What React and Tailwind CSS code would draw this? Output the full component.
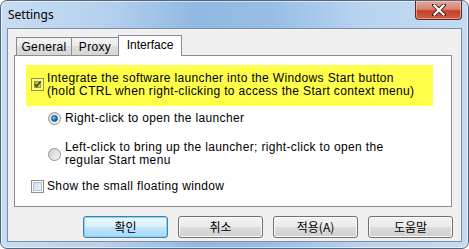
import React from 'react';

const UI = { fontFamily: '"Liberation Sans", "Noto Sans CJK KR", sans-serif' };
const KR = { fontFamily: '"Noto Sans CJK KR", "Liberation Sans", sans-serif' };

function CheckBox({ checked, tint }) {
  if (tint) {
    return (
      <span className="relative block w-[13px] h-[13px] shrink-0 border border-[#8f8f66] bg-[#ffff66]">
        <span className="absolute left-[2px] top-[2px] w-[7px] h-[7px] bg-[linear-gradient(135deg,#a9ab44_0%,#d6d85c_100%)] border border-[#9a9c4a]" />
        {checked && (
          <svg className="absolute left-[1px] top-[1px]" width="9" height="9" viewBox="0 0 9 9">
            <path d="M1.5 4.2 L3.6 6.6 L7.6 1.6" fill="none" stroke="#3d4d22" strokeWidth="1.6" />
          </svg>
        )}
      </span>
    );
  }
  return (
    <span className="relative block w-[13px] h-[13px] shrink-0 border border-[#8e8f8f] bg-white">
      <span className="absolute left-[1px] top-[1px] w-[9px] h-[9px] border border-[#b3c3d6] bg-[linear-gradient(135deg,#cbdcee_0%,#eef4fa_100%)]" />
    </span>
  );
}

function Radio({ on }) {
  return (
    <span className="relative flex items-center justify-center w-[13px] h-[13px] shrink-0 rounded-full border border-[#8e8f8f] bg-[linear-gradient(135deg,#d6d6d6_0%,#f8f8f8_100%)]">
      {on ? (
        <span className="block w-[7px] h-[7px] rounded-full bg-[radial-gradient(circle_at_35%_35%,#8fd3f7_0%,#2a7cc4_45%,#0f3f82_100%)] border border-[#1d4f8c]" />
      ) : (
        <span className="block w-[9px] h-[9px] rounded-full bg-[linear-gradient(135deg,#cfcfcf_0%,#f4f4f4_100%)]" />
      )}
    </span>
  );
}

function Btn({ children, primary }) {
  return (
    <button
      className={
        primary
          ? 'w-[85px] h-[22px] rounded-[3px] border border-[#3c7fb1] bg-[linear-gradient(180deg,#eaf6fd_0%,#d9f0fc_50%,#bee6fd_50%,#a7d9f5_100%)] shadow-[inset_0_0_0_1px_#8fd0f3] text-[12px] text-black leading-none'
          : 'w-[85px] h-[22px] rounded-[3px] border border-[#707070] bg-[linear-gradient(180deg,#f2f2f2_0%,#ebebeb_50%,#dddddd_50%,#cfcfcf_100%)] shadow-[inset_0_0_0_1px_#fbfbfb] text-[12px] text-black leading-none'
      }
      style={KR}
    >
      {children}
    </button>
  );
}

export default function App() {
  return (
    <div className="w-[469px] h-[249px] bg-white">
      <div className="relative w-[469px] h-[249px] rounded-[7px] border border-[#55677c] bg-[linear-gradient(90deg,#c8ddf3_0%,#b6d1ee_22%,#90b8e2_42%,#98bee6_58%,#b9d4f0_78%,#c3daf2_100%)] shadow-[inset_0_0_0_1px_rgba(255,255,255,0.55)] overflow-hidden">
        {/* title bar */}
        <div className="h-[27px] flex items-center pl-[7px]">
          <span className="text-[12px] text-black" style={{ fontFamily: '"Noto Sans", "Open Sans", sans-serif' }}>Settings</span>
        </div>

        {/* close */}
        <div className="absolute top-0 right-[6px] w-[47px] h-[19px] rounded-b-[4px] border border-t-0 border-[#5e2b24] bg-[linear-gradient(180deg,#e4a898_0%,#d88472_45%,#c6412c_55%,#cf5c44_100%)] shadow-[inset_0_0_0_1px_rgba(255,220,210,0.5)] flex items-center justify-center">
          <svg width="14" height="12" viewBox="0 0 14 12">
            <path d="M2 1 L12 11 M12 1 L2 11" stroke="#4a1d17" strokeWidth="4" strokeLinecap="square" />
            <path d="M2.5 1.5 L11.5 10.5 M11.5 1.5 L2.5 10.5" stroke="#ffffff" strokeWidth="2.2" strokeLinecap="square" />
          </svg>
        </div>

        {/* client area */}
        <div className="mx-[6px] h-[214px] border border-[#7f8ea1] bg-[#f0f0f0] pt-[6px] pl-[6px] pr-[8px] tracking-[0.35px]" style={UI}>
          {/* tabs */}
          <div className="flex items-end h-[20px] pl-[2px] relative z-10">
            <div className="w-[56px] h-[18px] flex items-center justify-center border border-b-0 border-[#898c95] bg-[linear-gradient(180deg,#f3f3f3_0%,#ebebeb_50%,#dedede_50%,#d6d6d6_100%)] text-[12px]">General</div>
            <div className="w-[47px] h-[18px] flex items-center justify-center border border-b-0 border-l-0 border-[#898c95] bg-[linear-gradient(180deg,#f3f3f3_0%,#ebebeb_50%,#dedede_50%,#d6d6d6_100%)] text-[12px]">Proxy</div>
            <div className="w-[64px] h-[21px] -mb-[1px] -ml-[1px] pb-[3px] flex items-center justify-center border border-b-0 border-[#898c95] bg-white text-[12px] tracking-normal">Interface</div>
          </div>

          {/* panel */}
          <div className="h-[152px] border border-[#898c95] bg-white pl-[11px] pt-[9px] w-[438px]">
            <div className="w-[407px] h-[41px] bg-[#ffff4a] flex items-center gap-[3px] pl-[5px] pb-[2px]">
              <CheckBox checked tint />
              <div className="text-[12px] leading-[13px] text-black">
                <div>Integrate the software launcher into the Windows Start button</div>
                <div>(hold CTRL when right-clicking to access the Start context menu)</div>
              </div>
            </div>

            <div className="flex items-center gap-[4px] pl-[22px] mt-[6px]">
              <Radio on />
              <span className="text-[12px] leading-[13px]">Right-click to open the launcher</span>
            </div>

            <div className="flex items-center gap-[4px] pl-[22px] mt-[16px]">
              <Radio />
              <div className="text-[12px] leading-[13px]">
                <div>Left-click to bring up the launcher; right-click to open the</div>
                <div>regular Start menu</div>
              </div>
            </div>

            <div className="flex items-center gap-[3px] pl-[5px] mt-[13px]">
              <CheckBox />
              <span className="text-[12px] leading-[13px]">Show the small floating window</span>
            </div>
          </div>

          {/* buttons */}
          <div className="flex justify-end gap-[10px] mt-[9px] tracking-normal">
            <Btn primary>확인</Btn>
            <Btn>취소</Btn>
            <Btn>적용(A)</Btn>
            <Btn>도움말</Btn>
          </div>
        </div>
      </div>
    </div>
  );
}
